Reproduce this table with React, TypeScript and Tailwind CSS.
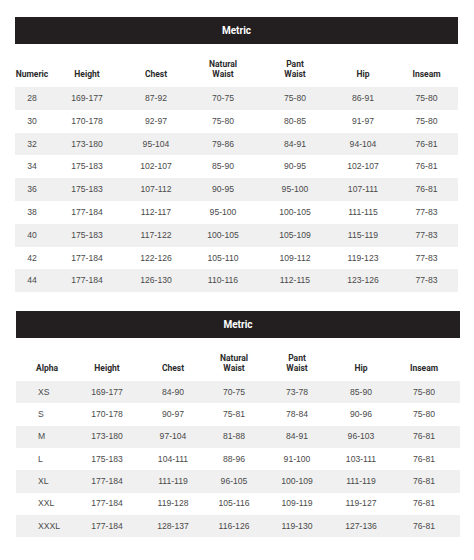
const numericRows = [
  ["28", "169-177", "87-92", "70-75", "75-80", "86-91", "75-80"],
  ["30", "170-178", "92-97", "75-80", "80-85", "91-97", "75-80"],
  ["32", "173-180", "95-104", "79-86", "84-91", "94-104", "76-81"],
  ["34", "175-183", "102-107", "85-90", "90-95", "102-107", "76-81"],
  ["36", "175-183", "107-112", "90-95", "95-100", "107-111", "76-81"],
  ["38", "177-184", "112-117", "95-100", "100-105", "111-115", "77-83"],
  ["40", "175-183", "117-122", "100-105", "105-109", "115-119", "77-83"],
  ["42", "177-184", "122-126", "105-110", "109-112", "119-123", "77-83"],
  ["44", "177-184", "126-130", "110-116", "112-115", "123-126", "77-83"],
]

const alphaRows = [
  ["XS", "169-177", "84-90", "70-75", "73-78", "85-90", "75-80"],
  ["S", "170-178", "90-97", "75-81", "78-84", "90-96", "75-80"],
  ["M", "173-180", "97-104", "81-88", "84-91", "96-103", "76-81"],
  ["L", "175-183", "104-111", "88-96", "91-100", "103-111", "76-81"],
  ["XL", "177-184", "111-119", "96-105", "100-109", "111-119", "76-81"],
  ["XXL", "177-184", "119-128", "105-116", "109-119", "119-127", "76-81"],
  ["XXXL", "177-184", "128-137", "116-126", "119-130", "127-136", "76-81"],
]

type TableProps = {
  first: string
  rows: string[][]
  cols: string
  rowH: string
  leftFirst?: boolean
  className?: string
}

function SizeTable({ first, rows, cols, rowH, leftFirst, className }: TableProps) {
  const heads = [first, "Height", "Chest", "Natural\nWaist", "Pant\nWaist", "Hip", "Inseam"]

  return (
    <div className={className}>
      <div className="h-[27px] bg-[#231f20] text-white flex items-center justify-center font-bold text-[10px] font-['Roboto',sans-serif]">
        Metric
      </div>
      <div className={`grid ${cols} h-[43px] items-end pb-[8px] text-[8.5px] font-bold text-[#2a2a2a] font-['Roboto',sans-serif] leading-[10px]`}>
        {heads.map((h, i) => (
          <div
            key={h}
            className={`whitespace-pre-line ${i === 0 && leftFirst ? "text-left pl-[20px]" : "text-center"}`}
          >
            {h}
          </div>
        ))}
      </div>
      {rows.map((r, ri) => (
        <div
          key={r[0]}
          className={`grid ${cols} ${rowH} items-center text-[8.6px] text-[#4a4a4a] font-['Liberation_Sans',Arial,sans-serif] ${ri % 2 === 0 ? "bg-[#f0f0f0]" : "bg-white"}`}
        >
          {r.map((c, ci) => (
            <div key={ci} className={ci === 0 && leftFirst ? "text-left pl-[22px]" : "text-center"}>
              {c}
            </div>
          ))}
        </div>
      ))}
    </div>
  )
}

export default function App() {
  return (
    <div className="w-[474px] h-[560px] bg-white pt-[17px] overflow-hidden">
      <SizeTable
        first="Numeric"
        rows={numericRows}
        cols="grid-cols-[34px_76px_62px_72px_72px_64px_63px]"
        rowH="h-[22.8px]"
        className="ml-[15px] w-[443px]"
      />
      <SizeTable
        first="Alpha"
        rows={alphaRows}
        cols="grid-cols-[60px_62px_70px_52px_74px_54px_72px]"
        rowH="h-[22.3px]"
        leftFirst
        className="ml-[16px] w-[444px] mt-[19px]"
      />
    </div>
  )
}
